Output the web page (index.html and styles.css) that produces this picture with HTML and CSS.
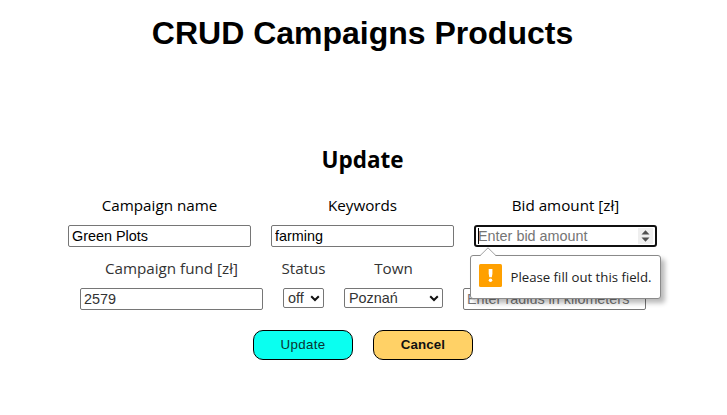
FILE: index.html
```html
<!DOCTYPE html>
<html lang="en">
<head>
<meta charset="utf-8">
<title>CRUD Campaigns Products</title>
<link rel="stylesheet" href="styles.css">
</head>
<body>
<h1>CRUD Campaigns Products</h1>
<main>
  <h2>Update</h2>
  <form novalidate>
    <div class="row">
      <label class="field"><span class="label">Campaign name</span><input class="control" type="text" value="Green Plots"></label>
      <label class="field"><span class="label">Keywords</span><input class="control" type="text" value="farming"></label>
      <div class="field bid">
        <label class="label" for="bid">Bid amount [zł]</label>
        <input class="control focused" id="bid" type="text" placeholder="Enter bid amount">
        <span class="caret"></span>
        <svg class="spinner" width="15" height="16" viewBox="0 0 15 16"><path d="M3.5 6.5 7.5 2.3l4 4.2zM3.5 9.5l4 4.2 4-4.2z"/></svg>
        <div class="tooltip">
          <svg class="arrow" width="18" height="10" viewBox="0 0 18 10"><path class="arrow-fill" d="M1 9 9 1l8 8v1H1z"/><path class="arrow-line" d="M1 8.7 9 .8l8 7.9"/></svg>
          <svg class="warning" width="23" height="23" viewBox="0 0 23 23"><rect width="23" height="23" rx="1.5" fill="#ffa000"/><path fill="#fff" d="M9.7 5h3.7v4.7l-.6 3.5h-2.5l-.6-3.5z"/><circle cx="11.5" cy="16.3" r="1.8" fill="#fff"/></svg>
          <span class="message">Please fill out this field.</span>
        </div>
      </div>
    </div>
    <div class="row second">
      <label class="field"><span class="label">Campaign fund [zł]</span><input class="control" type="text" value="2579"></label>
      <label class="field status"><span class="label">Status</span><select class="control"><option>off</option></select><svg class="chevron" width="10" height="7" viewBox="0 0 10 7"><path d="m1.2 1.2 3.8 3.8 3.8-3.8"/></svg></label>
      <label class="field town"><span class="label">Town</span><select class="control"><option>Poznań</option></select><svg class="chevron" width="10" height="7" viewBox="0 0 10 7"><path d="m1.2 1.2 3.8 3.8 3.8-3.8"/></svg></label>
      <div class="field radius"><span class="label"></span><input class="control" type="text" placeholder="Enter radius in kilometers"></div>
    </div>
    <div class="buttons"><button type="button" class="update">Update</button><button type="button" class="cancel">Cancel</button></div>
  </form>
</main>
</body>
</html>
```
FILE: styles.css
```css
* { box-sizing: border-box; }
body { margin: 0; background: #fff; color: #000; font-family: "Open Sans", "Noto Sans", sans-serif; overflow: hidden; }
h1 { margin: 0; padding-top: 14px; width: 725px; text-align: center; font: bold 32px/38px "Liberation Sans", sans-serif; }
main { width: 725px; padding-top: 92px; }
h2 { margin: 0; height: 32px; text-align: center; font-size: 22.5px; line-height: 32px; }
form { padding-top: 17px; }
.row { display: flex; justify-content: center; gap: 20px; height: 63px; }
.second { padding-left: 1px; color: #333; }
.field { position: relative; display: flex; flex-direction: column; align-items: center; width: 183px; }
.label { height: 32px; line-height: 24px; font-size: 15.2px; white-space: nowrap; }
.control { appearance: none; width: 100%; height: 22px; margin: 0; padding: 1px 3px; border: 1px solid #767676; border-radius: 2px; background: #fff; color: #000; font: 14.4px/18px "Liberation Sans", sans-serif; outline: none; }
.second .control { color: #333; }
.control::placeholder { color: #757575; opacity: 1; }
.focused { border: 2px solid #101010; border-radius: 3px; padding: 0 2px; }
.caret { position: absolute; left: 4px; top: 35px; width: 1px; height: 16px; background: #000; }
.spinner { position: absolute; right: 4px; top: 35px; background: #efefef; fill: #505050; }
.status { width: 41px; }
.town { width: 99px; }
select.control { height: 20px; padding: 0 4px; }
.chevron { position: absolute; right: 4px; top: 39px; fill: none; stroke: #111; stroke-width: 2; }
.tooltip { position: absolute; z-index: 2; left: -4px; top: 62px; width: 191px; height: 44px; display: flex; align-items: center; padding-left: 8px; background: #fff; border: 1px solid #8a8a8a; border-radius: 3px; box-shadow: 4px 4px 5px rgba(0, 0, 0, .28); }
.arrow { position: absolute; left: 8px; top: -9px; }
.arrow-fill { fill: #fff; }
.arrow-line { fill: none; stroke: #a0a0a0; }
.warning { margin-top: -3px; flex: none; }
.message { margin-left: 8.5px; font-size: 13.2px; color: #222; white-space: nowrap; }
.buttons { display: flex; justify-content: center; gap: 20px; padding: 11px 0 0 1px; }
button { width: 100px; height: 30px; padding: 0 0 2px; border: 1px solid #000; border-radius: 10px; font: 13.33px "Liberation Sans", sans-serif; letter-spacing: .35px; }
.update { background: #0afff0; color: #0b3330; }
.cancel { background: #ffd166; color: #111; font-weight: bold; letter-spacing: .1px; }
```
